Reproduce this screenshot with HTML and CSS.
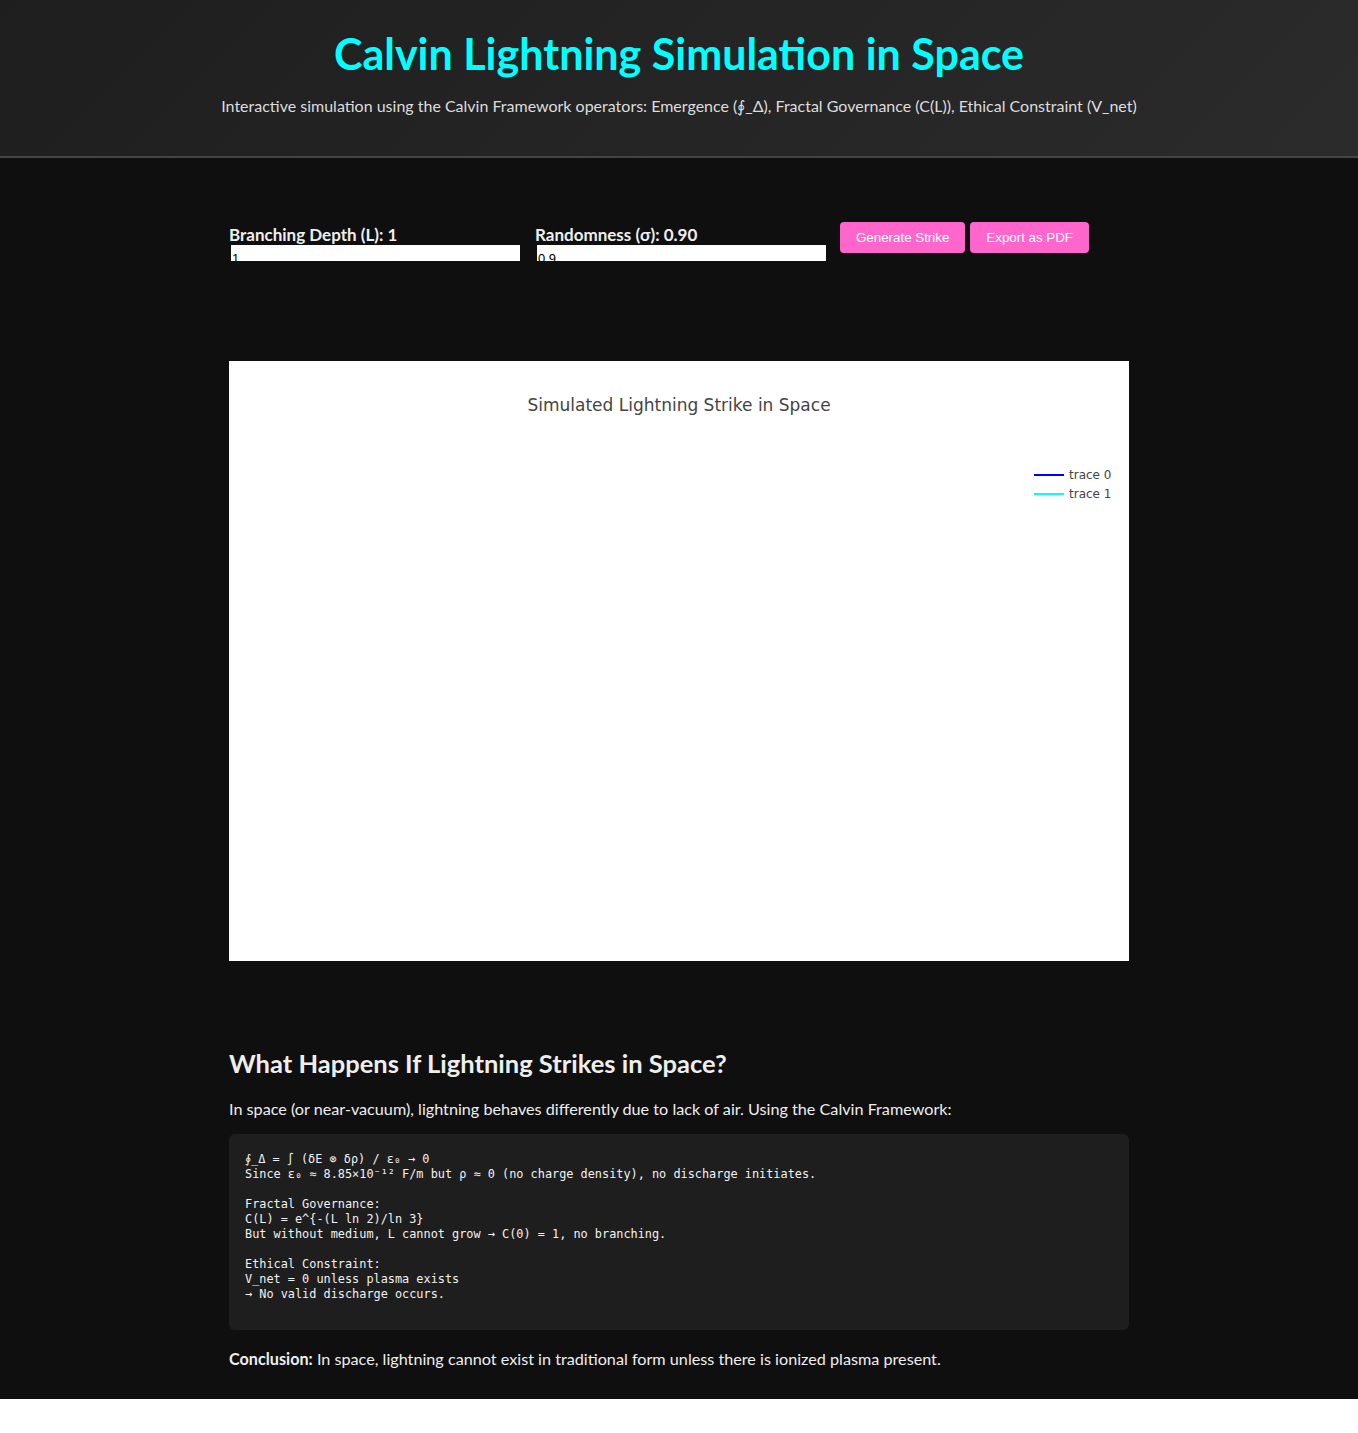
FILE: index.html
```html
<!DOCTYPE html>
<html lang="en">
<head>
<meta charset="utf-8">
<title>Calvin Lightning Simulation in Space</title>
<link rel="stylesheet" href="styles.css">
</head>
<body>
<header class="site-header">
  <h1 class="title">Calvin Lightning Simulation in Space</h1>
  <p class="subtitle">Interactive simulation using the Calvin Framework operators: Emergence (∮_Δ), Fractal Governance (C(L)), Ethical Constraint (V_net)</p>
</header>
<main class="main">
  <div class="container">
    <div class="controls">
      <div class="control">
        <div class="control-label">Branching Depth (L): 1</div>
        <div class="range-box">1</div>
      </div>
      <div class="control">
        <div class="control-label">Randomness (σ): 0.90</div>
        <div class="range-box">0.9</div>
      </div>
      <div class="buttons">
        <button class="btn btn-generate">Generate Strike</button>
        <button class="btn btn-export">Export as PDF</button>
      </div>
    </div>

    <div class="chart">
      <div class="chart-title">Simulated Lightning Strike in Space</div>
      <div class="legend">
        <div class="legend-item"><span class="legend-line line-blue"></span><span class="legend-text">trace 0</span></div>
        <div class="legend-item"><span class="legend-line line-cyan"></span><span class="legend-text">trace 1</span></div>
      </div>
    </div>

    <section class="explain">
      <h2 class="explain-title">What Happens If Lightning Strikes in Space?</h2>
      <p class="explain-text">In space (or near-vacuum), lightning behaves differently due to lack of air. Using the Calvin Framework:</p>
      <pre class="code">∮_Δ = ∫ (δE ⊗ δρ) / ε₀ → 0
Since ε₀ ≈ 8.85×10⁻¹² F/m but ρ ≈ 0 (no charge density), no discharge initiates.

Fractal Governance:
C(L) = e^{-(L ln 2)/ln 3}
But without medium, L cannot grow → C(0) = 1, no branching.

Ethical Constraint:
V_net = 0 unless plasma exists
→ No valid discharge occurs.
&#8203;</pre>
      <p class="conclusion"><strong>Conclusion:</strong> In space, lightning cannot exist in traditional form unless there is ionized plasma present.</p>
    </section>
  </div>
</main>
</body>
</html>
```
FILE: styles.css
```css
html {
  background: #ffffff;
}

body {
  margin: 0;
  background: #0f0f0f;
  color: #eeeeee;
  font-family: Lato, "Open Sans", "Noto Sans", sans-serif;
}

.site-header {
  background: linear-gradient(135deg, #1e1e1e, #2b2b2b);
  border-bottom: 2px solid #444444;
  text-align: center;
  padding: 30px 20px 38px;
}

.title {
  margin: 0;
  font-size: 43px;
  line-height: 48px;
  font-weight: 700;
  color: #00ffff;
}

.subtitle {
  margin: 16px 0 0;
  font-size: 16px;
  line-height: 24px;
  color: #dddddd;
}

.main {
  padding: 64px 0 31px;
}

.container {
  width: 900px;
  margin: 0 auto;
}

.controls {
  display: flex;
  align-items: flex-start;
  gap: 15px;
}

.control {
  width: 291px;
  padding-top: 2px;
}

.control-label {
  font-weight: 700;
  font-size: 17px;
  line-height: 21px;
  color: #eeeeee;
}

.range-box {
  margin-left: 2px;
  width: 289px;
  height: 16px;
  box-sizing: border-box;
  background: #ffffff;
  color: #000000;
  font-family: "Liberation Sans", Arial, sans-serif;
  font-size: 13px;
  line-height: 15px;
  padding: 6px 0 0 1px;
  overflow: hidden;
}

.buttons {
  display: flex;
  gap: 5px;
  margin-left: -1px;
}

.btn {
  background: #ff66cc;
  color: #ffffff;
  border: none;
  border-radius: 4px;
  font-family: "Liberation Sans", Arial, sans-serif;
  font-size: 13.33px;
  line-height: 15px;
  padding: 8px 16px;
}

.chart {
  position: relative;
  margin-top: 100px;
  height: 600px;
  background: #ffffff;
}

.chart-title {
  padding-top: 33px;
  text-align: center;
  font-family: "DejaVu Sans", Verdana, sans-serif;
  font-size: 17px;
  line-height: 22px;
  color: #444444;
}

.legend {
  position: absolute;
  left: 805px;
  top: 106px;
  display: flex;
  flex-direction: column;
  gap: 3px;
}

.legend-item {
  display: flex;
  align-items: center;
  height: 16px;
}

.legend-line {
  display: inline-block;
  width: 30px;
  height: 2px;
  margin-right: 5px;
}

.line-blue {
  background: #0000ff;
}

.line-cyan {
  background: #00ffff;
}

.legend-text {
  font-family: "DejaVu Sans", Verdana, sans-serif;
  font-size: 12px;
  color: #444444;
}

.explain {
  padding-top: 88px;
}

.explain-title {
  margin: 0;
  font-size: 25.5px;
  line-height: 29px;
  font-weight: 700;
  color: #eeeeee;
}

.explain-text {
  margin: 21px 0 0;
  font-size: 16.2px;
  line-height: 19px;
  color: #eeeeee;
}

.code {
  margin: 16px 0 0;
  background: #1e1e1e;
  border-radius: 6px;
  padding: 18px 16px 13px;
  font-family: "DejaVu Sans Mono", "Liberation Mono", monospace;
  font-size: 11.86px;
  line-height: 15px;
  color: #f2f2f2;
  white-space: pre;
}

.conclusion {
  margin: 19px 0 0;
  font-size: 16.2px;
  line-height: 19px;
  color: #eeeeee;
}
```
